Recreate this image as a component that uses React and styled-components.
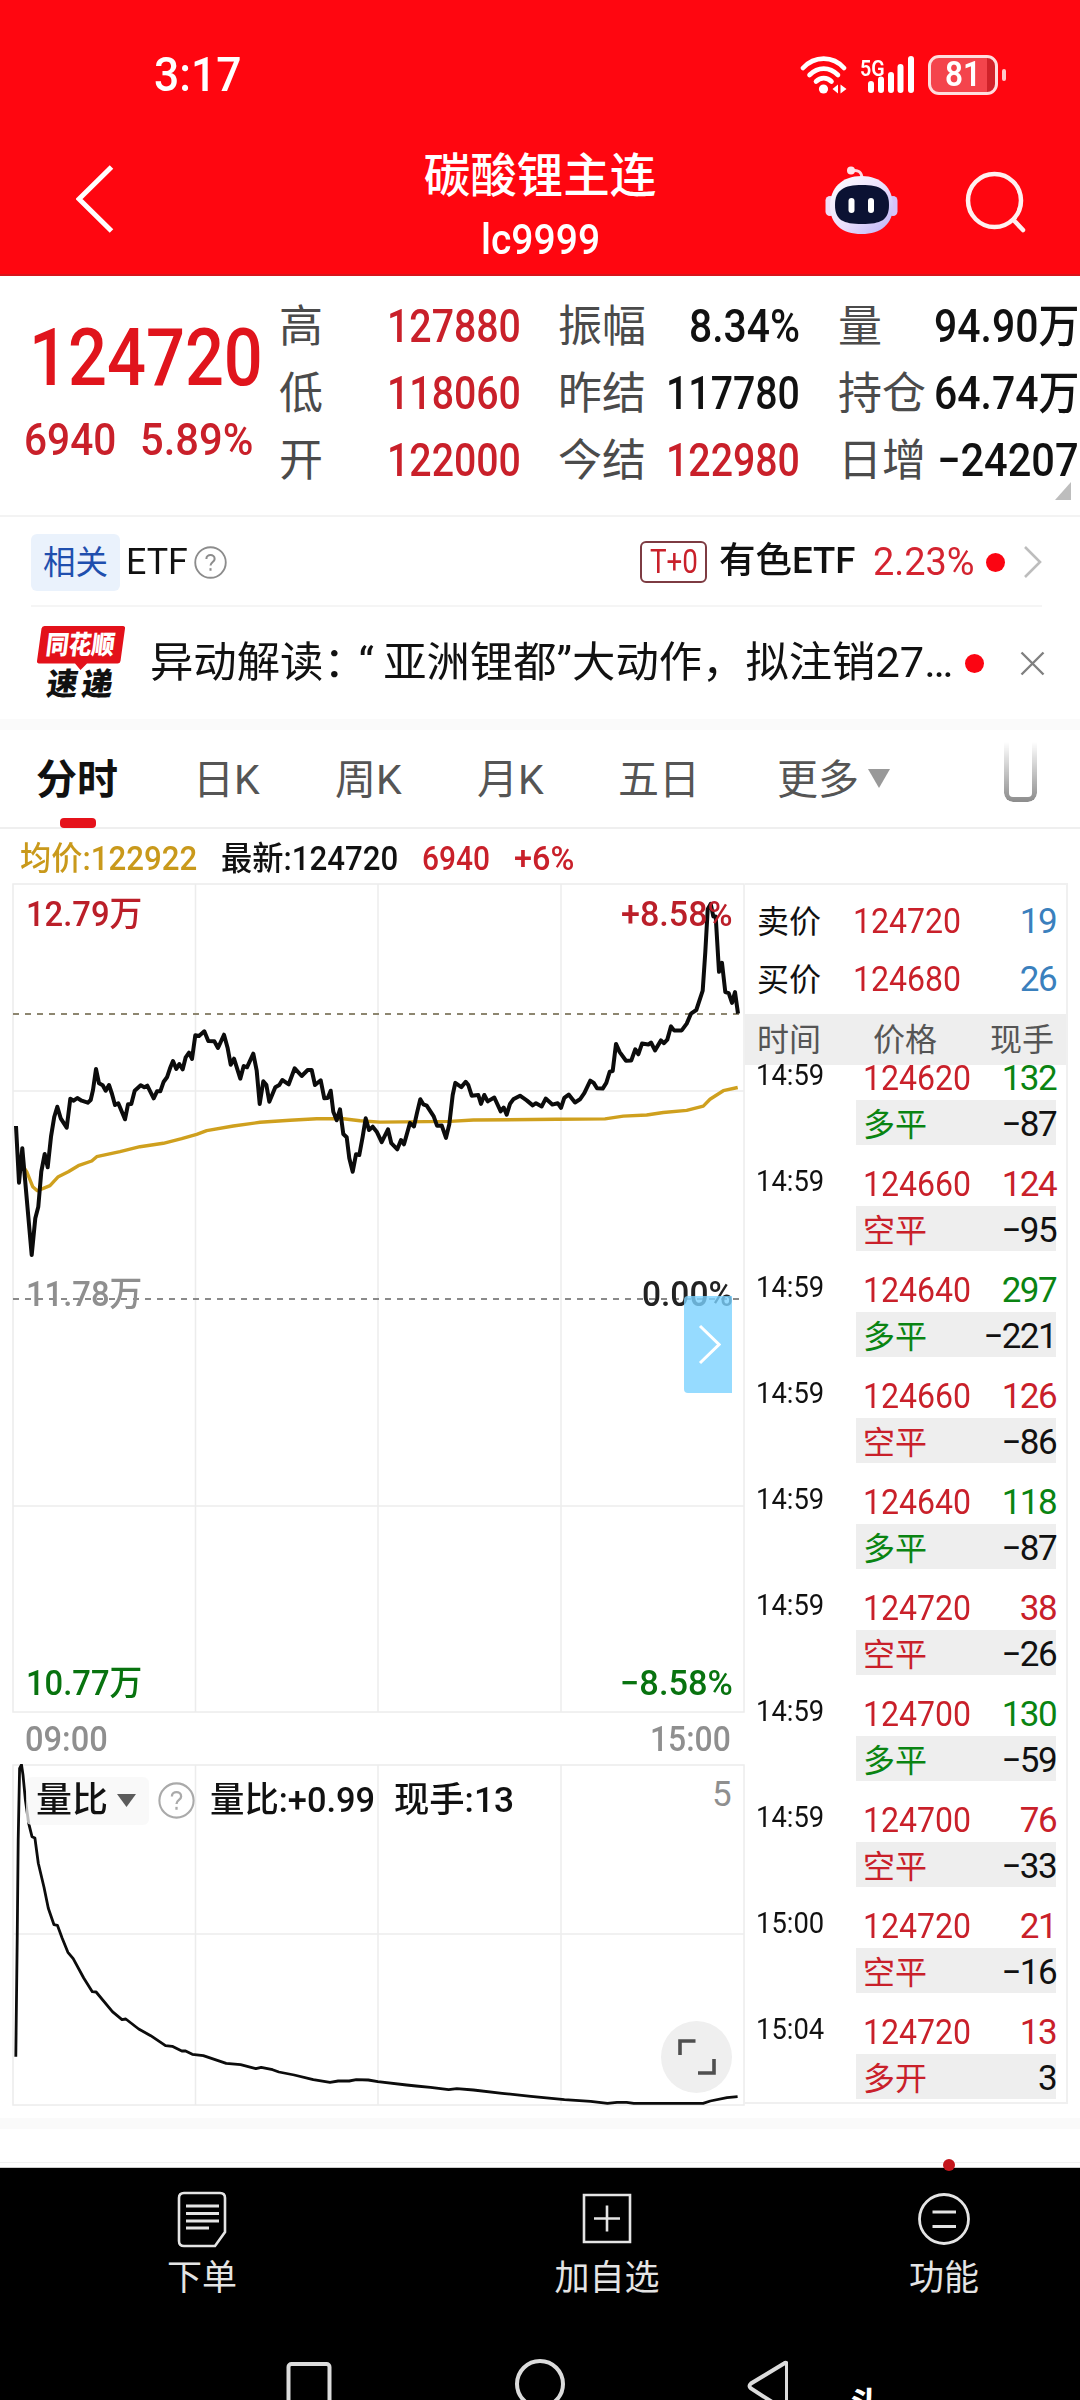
import React, { useLayoutEffect, useRef, useState } from 'react'
import styled, { createGlobalStyle } from 'styled-components'

const RED = '#c9202a'
const GREEN = '#0a8412'
const GRAY = '#8f8f8f'
const LINE = '#ececec'

const GlobalStyle = createGlobalStyle`
  * {
    box-sizing: border-box;
  }
  body {
    margin: 0;
    background: #fff;
    color: #111;
    font-family: Roboto, 'Noto Sans CJK SC', sans-serif;
  }
  svg {
    display: block;
    flex: none;
  }
`

/* ---------- text that is squeezed to the width of its cell ---------- */

const FitBox = styled.span`
  display: block;
  flex: none;
  width: ${({ $w }) => $w}px;
  margin-left: ${({ $ml }) => $ml || 0}px;
  font-size: ${({ $size }) => $size}px;
  font-weight: ${({ $weight }) => $weight || 400};
  color: ${({ $color }) => $color || 'inherit'};
  line-height: 1.2;
  white-space: nowrap;
`
const FitInner = styled.span`
  display: inline-block;
  vertical-align: top;
  transform-origin: 0 50%;
`

const Fit = ({ w, ml, size, weight, color, children }) => {
  const ref = useRef(null)
  const [scale, setScale] = useState(1)
  useLayoutEffect(() => {
    setScale(w / ref.current.offsetWidth)
  }, [w, children])
  return (
    <FitBox $w={w} $ml={ml} $size={size} $weight={weight} $color={color}>
      <FitInner ref={ref} style={{ transform: `scaleX(${scale})` }}>
        {children}
      </FitInner>
    </FitBox>
  )
}

/* ---------- header ---------- */

const Page = styled.div`
  width: 1080px;
  height: 2400px;
  overflow: hidden;
  display: flex;
  flex-direction: column;
`
const Header = styled.header`
  flex: none;
  height: 276px;
  background: #ff0610;
  color: #fff;
  border-bottom: 2px solid #d8141c;
`
const StatusBar = styled.div`
  height: 148px;
  padding: 1px 74px 0 154px;
  display: flex;
  align-items: center;
`
const Clock = styled.div`
  padding-top: 2px;
`
const StatusIcons = styled.div`
  margin-left: auto;
  display: flex;
  align-items: center;
`
const Network = styled.span`
  align-self: flex-start;
  width: 11px;
  margin-top: 1px;
  font-size: 22px;
  font-weight: 600;
  line-height: 22px;
`
const Battery = styled.div`
  width: 70px;
  height: 40px;
  margin-left: 12px;
  padding-left: 14px;
  border: 3px solid #ffdede;
  border-radius: 11px;
  display: flex;
  align-items: center;
  background: linear-gradient(90deg, #f4444c 56px, #d0222a 56px);
`
const BatteryTip = styled.div`
  width: 4px;
  height: 12px;
  margin-left: 4px;
  border-radius: 2px;
  background: #ffc9c9;
`
const TitleBar = styled.div`
  height: 126px;
  display: flex;
`
const TitleSide = styled.div`
  width: 423px;
  display: flex;
  padding: ${({ $pad }) => $pad};
`
const Titles = styled.div`
  width: 234px;
  display: flex;
  flex-direction: column;
  align-items: center;
`
const Title = styled.h1`
  margin: 0 0 10px;
  font-size: 46.5px;
  font-weight: 500;
  line-height: 56px;
  white-space: nowrap;
`

/* ---------- quote ---------- */

const Quote = styled.section`
  flex: none;
  height: 241px;
  border-bottom: 2px solid #f3f3f3;
  display: flex;
  position: relative;
`
const LastPrice = styled.div`
  width: 280px;
  padding-top: 34px;
`
const Change = styled.div`
  display: flex;
  margin-top: 7px;
`
const Stats = styled.div`
  display: grid;
  grid-template-columns: 109px 170px 109px 171px 95px 147px;
  grid-template-rows: repeat(3, 67px);
  align-items: center;
  padding-top: 17px;
`
const StatLabel = styled.span`
  font-size: 44px;
  line-height: 52px;
  color: #4b4b4b;
  white-space: nowrap;
`
const Corner = styled.i`
  position: absolute;
  left: 1055px;
  top: 206px;
  border: solid transparent;
  border-width: 0 0 18px 16px;
  border-bottom-color: #bdbdbd;
`

/* ---------- related ETF and news ---------- */

const EtfRow = styled.section`
  flex: none;
  height: 90px;
  margin: 0 38px 0 31px;
  padding-top: 2px;
  border-bottom: 2px solid #f5f5f5;
  display: flex;
  align-items: center;
`
const RelatedTag = styled.span`
  width: 89px;
  height: 57px;
  border-radius: 6px;
  background: #eaf2fc;
  color: #1f4fae;
  font-size: 32.5px;
  line-height: 59px;
  text-align: center;
`
const HelpSlot = styled.span`
  margin-left: 6px;
`
const TradeTag = styled.span`
  width: 67px;
  height: 42px;
  margin-left: auto;
  padding-left: 8px;
  border: 2px solid #7d3b42;
  border-radius: 6px;
  display: flex;
  align-items: center;
`
const Dot = styled.i`
  flex: none;
  width: 19px;
  height: 19px;
  border-radius: 50%;
  background: #fb0512;
  margin-left: ${({ $ml }) => $ml}px;
`
const More = styled.span`
  margin-left: 18px;
`
const Close = styled.span`
  margin-left: 36px;
`
const NewsRow = styled.section`
  flex: none;
  height: 112px;
  padding: 1px 0 0 37px;
  display: flex;
  align-items: center;
`
const NewsLogo = styled.div`
  position: relative;
  width: 88px;
  height: 76px;
  font-weight: 900;
`
const LogoTop = styled.span`
  position: absolute;
  left: 9px;
  top: 5px;
  font-size: 26px;
  line-height: 28px;
  color: #fff;
  white-space: nowrap;
  transform: scaleX(0.88) skewX(-8deg);
  transform-origin: 0 50%;
`
const LogoBottom = styled.span`
  position: absolute;
  left: 10px;
  top: 41px;
  font-size: 31px;
  line-height: 36px;
  letter-spacing: 4px;
  color: #111;
  white-space: nowrap;
  transform: skewX(-8deg);
`
const OpenQuote = styled.span`
  margin: 0 9px 0 -8px;
`
const Band = styled.div`
  flex: none;
  height: 11px;
  background: #fafafa;
`

/* ---------- tabs and legend ---------- */

const Tabs = styled.nav`
  flex: none;
  height: 99px;
  border-bottom: 2px solid #efefef;
  display: grid;
  grid-template-columns: 157px 142px 142px 141px 159px 228px 1fr;
  padding-left: 36px;
`
const Tab = styled.div`
  position: relative;
  height: 98px;
  padding-top: 24px;
  display: flex;
  font-size: 41px;
  line-height: 52px;
  white-space: nowrap;
  font-weight: ${({ $active }) => ($active ? 700 : 400)};
  color: ${({ $active }) => ($active ? '#111' : '#555')};
  &::after {
    content: '';
    display: ${({ $active }) => ($active ? 'block' : 'none')};
    position: absolute;
    left: 24px;
    bottom: 0;
    width: 36px;
    height: 10px;
    border-radius: 4px;
    background: #e5121b;
  }
`
const Caret = styled.i`
  width: ${({ $w }) => $w}px;
  height: ${({ $h }) => $h}px;
  margin-left: ${({ $ml }) => $ml}px;
  margin-top: ${({ $mt }) => $mt || 0}px;
  background: ${({ $color }) => $color};
  clip-path: polygon(0 0, 100% 0, 50% 100%);
`
const Clip = styled.div`
  width: 33px;
  height: 60px;
  margin: 12px 0 0 -1px;
  border: 5px solid #8c8c8c;
  border-top: 0;
  border-radius: 0 0 9px 9px;
  mask-image: linear-gradient(transparent, #000);
`
const Legend = styled.div`
  flex: none;
  height: 54px;
  padding: 5px 0 0 20px;
  display: flex;
  align-items: center;
`

/* ---------- charts ---------- */

const Main = styled.main`
  flex: none;
  height: 1235px;
  padding-left: 12px;
  display: flex;
`
const Charts = styled.div`
  width: 733px;
`
const PricePanel = styled.div`
  position: relative;
  height: 830px;
`
const RatioPanel = styled.div`
  position: relative;
  height: 342px;
`
const Axis = styled.div`
  height: 51px;
  padding: 2px 14px 0 13px;
  display: flex;
  align-items: center;
  justify-content: space-between;
`
const Mark = styled.div`
  position: absolute;
  top: ${({ $top }) => $top}px;
  ${({ $right }) => ($right ? 'right: 12px;' : 'left: 14px;')}
`
const Expand = styled.button`
  position: absolute;
  left: 672px;
  top: 413px;
  width: 48px;
  height: 97px;
  padding: 0 0 0 2px;
  border: 0;
  border-radius: 4px 0 0 4px;
  background: rgba(124, 210, 255, 0.8);
  display: grid;
  place-items: center;
`
const RatioBar = styled.div`
  position: absolute;
  left: 14px;
  top: 12px;
  width: 706px;
  height: 49px;
  display: flex;
  align-items: center;
`
const Picker = styled.div`
  width: 123px;
  height: 48px;
  margin-right: 9px;
  padding-left: 10px;
  border-radius: 6px;
  background: rgba(247, 247, 247, 0.75);
  display: flex;
  align-items: center;
`
const RatioMax = styled.span`
  margin: -11px 2px 0 auto;
  width: 18px;
  font-size: 35px;
  line-height: 40px;
  color: ${GRAY};
`
const FullScreen = styled.button`
  position: absolute;
  left: 649px;
  top: 257px;
  width: 71px;
  height: 72px;
  padding: 0;
  border: 0;
  border-radius: 50%;
  background: #efefef;
  display: grid;
  place-items: center;
`

/* ---------- order book ---------- */

const Book = styled.aside`
  width: 323px;
  height: 1221px;
  overflow: hidden;
  border: solid #f0f0f0;
  border-width: 2px 2px 2px 0;
`
const Offer = styled.div`
  height: 58px;
  padding: 0 11px 0 12px;
  display: flex;
  align-items: center;
`
const Offers = styled.div`
  height: 129px;
  padding-top: 8px;
`
const BookHead = styled.div`
  height: 51px;
  padding: 7px 12px 0;
  background: #eee;
  color: #555;
  font-size: 32px;
  line-height: 38px;
  display: grid;
  grid-template-columns: 116px 117px 1fr;
`
const Right = styled.span`
  margin-left: auto;
  font-size: 35px;
  line-height: 28px;
  color: ${({ $color }) => $color || '#111'};
  letter-spacing: -1.6px;
  margin-right: -1px;
`
const Trade = styled.div`
  height: 106px;
  padding: 0 11px 0 11px;
  display: grid;
  grid-template-columns: 100px 200px;
  grid-template-rows: 35px 45px;
`
const TradeTime = styled.div`
  margin-top: -7px;
`
const TradeTop = styled.div`
  height: 30px;
  margin-top: -1px;
  padding: 0 1px 0 7px;
  display: flex;
  align-items: center;
`
const TradeSub = styled.div`
  grid-column: 2;
  padding: 4px 1px 0 7px;
  background: #eee;
  display: flex;
  align-items: center;
`
const Kind = styled.span`
  font-size: 32px;
  line-height: 40px;
  color: ${({ $color }) => $color};
`

/* ---------- bottom ---------- */

const Gap = styled.div`
  flex: none;
  height: 39px;
  border-bottom: 1px solid #ccc;
  position: relative;
  background: linear-gradient(#fff 33px, #f0f0f0 33px, #f0f0f0 34px, #fff 34px);
`
const RedPoint = styled.i`
  position: absolute;
  left: 943px;
  top: 30px;
  width: 12px;
  height: 12px;
  border-radius: 50%;
  background: #c4161c;
`
const Footer = styled.footer`
  flex: 1;
  background: #000;
  color: #e4e4e4;
`
const Actions = styled.div`
  height: 190px;
  padding: 22px 34px 0 0;
  display: grid;
  grid-template-columns: 404px 406px 268px;
`
const Action = styled.div`
  display: flex;
  flex-direction: column;
  align-items: center;
  font-size: 35px;
  line-height: 44px;
  white-space: nowrap;
  svg {
    margin-bottom: 9px;
  }
`
const SystemNav = styled.div`
  height: 42px;
  padding-left: 286px;
  display: flex;
  overflow: hidden;
`
const Watermark = styled.span`
  margin: 31px 0 0 61px;
  font-size: 35px;
  font-weight: 700;
  line-height: 36px;
  color: #fff;
`

/* ---------- data ---------- */

const STATS = [
  ['高', '127880', 134, RED, '振幅', '8.34%', 111, '#111', '量', '94.90万', 145, '#111'],
  ['低', '118060', 134, RED, '昨结', '117780', 134, '#111', '持仓', '64.74万', 145, '#111'],
  ['开', '122000', 134, RED, '今结', '122980', 134, RED, '日增', '−24207', 142, '#111'],
]

const TRADES = [
  ['14:59', '124620', '132', GREEN, '多平', '−87'],
  ['14:59', '124660', '124', RED, '空平', '−95'],
  ['14:59', '124640', '297', GREEN, '多平', '−221'],
  ['14:59', '124660', '126', RED, '空平', '−86'],
  ['14:59', '124640', '118', GREEN, '多平', '−87'],
  ['14:59', '124720', '38', RED, '空平', '−26'],
  ['14:59', '124700', '130', GREEN, '多平', '−59'],
  ['14:59', '124700', '76', RED, '空平', '−33'],
  ['15:00', '124720', '21', RED, '空平', '−16'],
  ['15:04', '124720', '13', RED, '多开', '3'],
]

// first half of the session, [x, y] pairs
const PRICE_AM = [
  48, 768, 57, 938, 67, 835, 95, 1155, 106, 1045, 115, 1010, 124, 905, 134, 852, 143, 892, 153, 800,
  163, 740, 172, 710, 182, 745, 200, 773, 211, 686, 221, 692, 232, 684, 245, 692, 263, 698, 272, 690,
  279, 660, 288, 597, 297, 640, 308, 646, 317, 662, 327, 645, 336, 672, 345, 705, 355, 700, 375, 748,
  384, 703, 394, 702, 404, 662, 422, 646, 433, 652, 442, 647, 461, 685, 471, 664, 481, 664, 491, 635,
  501, 622, 510, 595, 519, 573, 529, 597, 538, 582, 548, 598, 557, 562, 567, 548, 576, 567, 586, 496,
  597, 498, 613, 484, 625, 513, 643, 514, 654, 534, 672, 494, 683, 535, 692, 584, 702, 566, 721, 626,
  731, 588, 741, 592, 760, 551, 770, 602, 779, 702, 790, 634, 799, 644, 808, 695, 826, 652, 838, 645,
  847, 630, 866, 643, 884, 595, 905, 618, 923, 600, 935, 600, 945, 645, 962, 631, 973, 685, 983, 684,
  992, 662, 1000, 725, 1010, 751, 1020, 718, 1030, 792, 1040, 802, 1048, 865, 1058, 905, 1068, 853,
  1078, 855, 1088, 800, 1097, 745, 1107, 780, 1118, 770, 1130, 785,
]
const PRICE_PM = [
  35, 762, 54, 726, 64, 765, 82, 782, 93, 756, 102, 768, 112, 735, 120, 708, 132, 718,
  141, 680, 151, 642, 160, 656, 170, 660, 191, 690, 201, 716, 215, 715, 228, 750, 238, 712, 248, 630,
  256, 596, 274, 608, 287, 593, 295, 602, 305, 632, 325, 630, 333, 655, 343, 630, 353, 648, 373, 637,
  392, 676, 401, 665, 410, 685, 420, 655, 430, 642, 450, 632, 470, 645, 488, 659, 498, 653, 515, 662,
  527, 640, 547, 657, 563, 653, 573, 666, 583, 638, 596, 629, 615, 651, 630, 642, 643, 625, 661, 590,
  671, 596, 681, 611, 698, 612, 709, 596, 719, 565, 728, 563, 738, 487, 749, 510, 768, 534, 784, 533,
  796, 502, 805, 516, 816, 486, 835, 489, 843, 483, 855, 505, 873, 477, 882, 485, 892, 475, 903, 438,
  912, 449, 935, 449, 950, 430, 963, 402, 979, 392, 998, 338, 1006, 230, 1013, 110, 1022, 95, 1030, 130,
  1037, 130, 1047, 285, 1056, 260, 1066, 342, 1076, 345, 1086, 372, 1095, 342, 1104, 402,
]
const AVG_AM = [
  70, 890, 80, 905, 98, 950, 112, 962, 130, 955, 150, 947, 175, 920, 205, 905, 235, 887, 275, 873,
  290, 860, 360, 845, 420, 830, 490, 820, 545, 806, 590, 793, 620, 782, 700, 768, 780, 757, 870, 751,
  950, 746, 1030, 746, 1080, 752,
]
const AVG_PM = [
  30, 706, 240, 704, 310, 700, 560, 698, 705, 697, 760, 689, 830, 686, 880, 679, 950, 673, 1000, 661,
  1020, 642, 1060, 618, 1103, 609,
]
const RATIO = [
  33, 1250, 36, 900, 38, 600, 41, 385, 45, 374, 48, 405, 53, 480, 60, 550, 67, 590, 73, 594, 80, 670,
  92, 742, 101, 805, 113, 854, 120, 856, 130, 895, 142, 937, 153, 956, 175, 1014, 193, 1055, 201, 1056,
  235, 1115, 255, 1139, 263, 1137, 290, 1167, 315, 1187, 346, 1217, 360, 1219, 380, 1233, 388, 1233,
  402, 1243, 425, 1247, 473, 1270, 503, 1274, 535, 1286, 546, 1282, 570, 1289, 583, 1296, 615, 1305,
  655, 1319, 690, 1327, 707, 1323, 730, 1323, 745, 1319, 770, 1320, 790, 1325, 850, 1335, 870, 1338,
  900, 1342, 938, 1349, 955, 1346, 990, 1350, 1050, 1360, 1110, 1369, 1180, 1379, 1235, 1384,
  1270, 1390, 1290, 1387, 1310, 1387, 1325, 1390, 1470, 1390, 1485, 1383, 1520, 1373, 1542, 1370,
]

const plot = (data, x0, y0, kx, ky) => {
  const out = []
  for (let i = 0; i < data.length; i += 2) {
    out.push(`${(x0 + data[i] * kx).toFixed(1)},${(y0 + data[i + 1] * ky).toFixed(1)}`)
  }
  return out.join(' ')
}

const PRICE_POINTS = `${plot(PRICE_AM, -12, -13, 1 / 3, 1 / 3)} ${plot(PRICE_PM, 358, -13, 1 / 3, 1 / 2.8)}`
const AVG_POINTS = `${plot(AVG_AM, -12, -13, 1 / 3, 1 / 3)} ${plot(AVG_PM, 358, -13, 1 / 3, 1 / 2.8)}`
const RATIO_POINTS = plot(RATIO, -12, -124, 1 / 2.0907, 1 / 3)

/* ---------- drawings ---------- */

const Grid = ({ height, rows }) => (
  <g fill="none" stroke={LINE} strokeWidth="1.5">
    <rect x="1" y="1" width="731" height={height} />
    {[183.5, 366, 549].map(x => <path key={x} d={`M${x} 1v${height}`} />)}
    {rows.map(y => <path key={y} d={`M1 ${y}h731`} />)}
  </g>
)

const PriceChart = () => (
  <svg width="733" height="830" viewBox="0 0 733 830">
    <Grid height={828} rows={[208, 623]} />
    <path d="M1 131h731" stroke="#8d8670" strokeWidth="1.8" strokeDasharray="6 6" />
    <path d="M1 416h731" stroke="#8a8a8a" strokeWidth="1.8" strokeDasharray="6 6" />
    <polyline points={AVG_POINTS} fill="none" stroke="#cfa01e" strokeWidth="3.4" strokeLinejoin="round" />
    <polyline points={PRICE_POINTS} fill="none" stroke="#0c0c0c" strokeWidth="4" strokeLinejoin="round" />
  </svg>
)

const RatioChart = () => (
  <svg width="733" height="342" viewBox="0 0 733 342">
    <Grid height={340} rows={[170]} />
    <polyline points={RATIO_POINTS} fill="none" stroke="#0c0c0c" strokeWidth="2.8" strokeLinejoin="round" />
  </svg>
)

const Wifi = () => (
  <svg width="60" height="40" viewBox="0 0 60 40" fill="none" stroke="#fff" strokeWidth="4.6" strokeLinecap="round">
    <path d="M3 13C14.5 .5 33 .5 44 13" />
    <path d="M9.5 20C18 11.5 29.5 11.5 38 20" />
    <path d="M16 26.5C20.5 22 27 22 31.5 26.5" />
    <circle cx="23.500" cy="34" r="4.6" fill="#fff" stroke="none" />
    <path d="M38 29.5v9l-5.500-4.5zM40.500 29.5l6 4.5-6 4.5z" fill="#fff" stroke="none" />
  </svg>
)

const Signal = () => (
  <svg width="45" height="40" viewBox="11 0 45 40" overflow="visible">
    <path
      d="M11 29v6M21 24.5V35M31 20v15M40.5 12v23M51 4v31"
      stroke="#fff"
      strokeWidth="6"
      strokeLinecap="round"
    />
  </svg>
)

const Back = () => (
  <svg width="38" height="68" viewBox="0 0 38 68" fill="none" stroke="#fff" strokeWidth="5">
    <path d="M35.5 2 3 34l32.500 32" />
  </svg>
)

const Robot = () => (
  <svg width="73" height="69" viewBox="0 0 73 69">
    <defs>
      <linearGradient id="shell" x1="0" y1="0" x2="1" y2="1">
        <stop offset="0" stopColor="#fff" />
        <stop offset=".55" stopColor="#e9defc" />
        <stop offset="1" stopColor="#b9b0f6" />
      </linearGradient>
    </defs>
    <path d="M26 5c7-2 11 1 11 8" fill="none" stroke="#ffd9e2" strokeWidth="3" />
    <circle cx="26" cy="4.500" r="4" fill="#ffe3ea" />
    <rect x=".5" y="30" width="9" height="20" rx="4.500" fill="#f1dcf8" />
    <rect x="63.500" y="30" width="9" height="20" rx="4.500" fill="#d6c2fa" />
    <path d="M36.500 10C56 10 68 22 68 40 68 58 56 68 36.500 68S5 58 5 40C5 22 17 10 36.500 10z" fill="url(#shell)" />
    <path d="M37 19c18 0 27 5 27 20s-8 19-27 19-27-4-27-19 9-20 27-20z" fill="#0b1233" />
    <rect x="23.500" y="32" width="6" height="15" rx="3" fill="#fff" />
    <rect x="43" y="32" width="6" height="15" rx="3" fill="#fff" />
  </svg>
)

const Search = () => (
  <svg width="62" height="64" viewBox="0 0 62 64" fill="none" stroke="#fff0f0" strokeWidth="4.500" strokeLinecap="round">
    <circle cx="29.500" cy="30.500" r="26.500" />
    <path d="m48.500 50 9.500 10" />
  </svg>
)

const Help = ({ r, color }) => (
  <svg width={r * 2 + 2} height={r * 2 + 2} viewBox="0 0 32 32" fill="none" stroke={color} strokeWidth="1.800">
    <circle cx="16" cy="16" r="14.800" />
    <path d="M12 12.500c0-5 8-5 8 0 0 3-4 3-4 6.500" strokeWidth="2" />
    <path d="M16 21.500v2.500" strokeWidth="2" />
  </svg>
)

const Chevron = ({ color, width = 19, height = 34, stroke = 2.6 }) => (
  <svg width={width} height={height} viewBox={`0 0 ${width} ${height}`} fill="none" stroke={color} strokeWidth={stroke}>
    <path d={`M2 2 ${width - 2} ${height / 2} 2 ${height - 2}`} />
  </svg>
)

const Cross = () => (
  <svg width="25" height="25" viewBox="0 0 25 25" stroke="#808080" strokeWidth="2.400">
    <path d="M1.500 1.500l22 22M23.500 1.500l-22 22" />
  </svg>
)

const LogoPlate = () => (
  <svg width="88" height="44" viewBox="0 0 88 44">
    <path d="M7.500 0H86a2 2 0 0 1 2 2.500L83.500 35q-.4 2.500-3 2.500H50L43.500 44 38 37.500H2a2 2 0 0 1-2-2.500L4.500 2.500Q5 0 7.500 0z" fill="#e3111a" />
  </svg>
)

const App = () => (
  <>
    <GlobalStyle />
    <Page>
      <Header>
        <StatusBar>
          <Clock>
            <Fit w={87} size={49} weight={500}>3:17</Fit>
          </Clock>
          <StatusIcons>
            <Wifi />
            <Network>
              <Fit w={25} size={22} weight={600}>5G</Fit>
            </Network>
            <Signal />
            <Battery>
              <Fit w={36} size={35} weight={600}>81</Fit>
            </Battery>
            <BatteryTip />
          </StatusIcons>
        </StatusBar>
        <TitleBar>
          <TitleSide $pad="17px 0 0 76px">
            <Back />
          </TitleSide>
          <Titles>
            <Title>碳酸锂主连</Title>
            <Fit w={119} size={43} weight={500}>lc9999</Fit>
          </Titles>
          <TitleSide $pad="18px 0 0 168px">
            <Robot />
            <TitleSide $pad="4px 0 0 67px">
              <Search />
            </TitleSide>
          </TitleSide>
        </TitleBar>
      </Header>

      <Quote>
        <LastPrice>
          <Fit w={234} ml={29} size={80} weight={500} color="#e0141c">124720</Fit>
          <Change>
            <Fit w={92} ml={24} size={45} weight={500} color={RED}>6940</Fit>
            <Fit w={113} ml={24} size={45} weight={500} color={RED}>5.89%</Fit>
          </Change>
        </LastPrice>
        <Stats>
          {STATS.map(row => [0, 4, 8].map(i => (
            <React.Fragment key={row[i]}>
              <StatLabel>{row[i]}</StatLabel>
              <Fit w={row[i + 2]} ml={(i === 8 ? 146 : 133) - row[i + 2]} size={46} weight={500} color={row[i + 3]}>
                {row[i + 1]}
              </Fit>
            </React.Fragment>
          )))}
        </Stats>
        <Corner />
      </Quote>

      <EtfRow>
        <RelatedTag>相关</RelatedTag>
        <Fit w={62} ml={6} size={37}>ETF</Fit>
        <HelpSlot>
          <Help r={15.5} color="#8c8c8c" />
        </HelpSlot>
        <TradeTag>
          <Fit w={48} size={33} color={RED}>T+0</Fit>
        </TradeTag>
        <Fit w={136} ml={12} size={36} weight={500}>有色ETF</Fit>
        <Fit w={102} ml={18} size={39} color="#d42430">2.23%</Fit>
        <Dot $ml={11} />
        <More>
          <Chevron color="#bdbdbd" />
        </More>
      </EtfRow>

      <NewsRow>
        <NewsLogo>
          <LogoPlate />
          <LogoTop>同花顺</LogoTop>
          <LogoBottom>速递</LogoBottom>
        </NewsLogo>
        <Fit w={803} ml={25} size={42}>
          异动解读：<OpenQuote>“</OpenQuote>亚洲锂都”大动作，拟注销27…
        </Fit>
        <Dot $ml={12} />
        <Close>
          <Cross />
        </Close>
      </NewsRow>
      <Band />

      <Tabs>
        <Tab $active>分时</Tab>
        <Tab>日K</Tab>
        <Tab>周K</Tab>
        <Tab>月K</Tab>
        <Tab>五日</Tab>
        <Tab>
          更多
          <Caret $w={22} $h={19} $ml={9} $mt={15} $color="#999" />
        </Tab>
        <Clip />
      </Tabs>
      <Legend>
        <Fit w={177} size={33} weight={500} color="#c9991b">均价:122922</Fit>
        <Fit w={177} ml={24} size={33} weight={500}>最新:124720</Fit>
        <Fit w={68} ml={24} size={33} weight={500} color={RED}>6940</Fit>
        <Fit w={60} ml={24} size={33} weight={500} color={RED}>+6%</Fit>
      </Legend>

      <Main>
        <Charts>
          <PricePanel>
            <Mark $top={11}><Fit w={116} size={35} weight={500} color="#bb1f29">12.79万</Fit></Mark>
            <Mark $top={11} $right><Fit w={112} size={35} weight={500} color="#bb1f29">+8.58%</Fit></Mark>
            <Mark $top={391}><Fit w={116} size={35} weight={500} color={GRAY}>11.78万</Fit></Mark>
            <Mark $top={391} $right><Fit w={91} size={35} weight={500} color="#222">0.00%</Fit></Mark>
            <Mark $top={780}><Fit w={116} size={35} weight={500} color="#08730f">10.77万</Fit></Mark>
            <Mark $top={780} $right><Fit w={113} size={35} weight={500} color="#08730f">−8.58%</Fit></Mark>
            <PriceChart />
            <Expand>
              <Chevron color="#fff" width={23} height={41} stroke={3} />
            </Expand>
          </PricePanel>
          <Axis>
            <Fit w={83} size={35} weight={500} color={GRAY}>09:00</Fit>
            <Fit w={81} size={35} weight={500} color={GRAY}>15:00</Fit>
          </Axis>
          <RatioPanel>
            <RatioChart />
            <RatioBar>
              <Picker>
                <Fit w={72} size={35} weight={500}>量比</Fit>
                <Caret $w={19} $h={13} $ml={9} $color="#5c5c5c" />
              </Picker>
              <Help r={17.5} color="#aaa" />
              <Fit w={165} ml={15} size={35} weight={500}>量比:+0.99</Fit>
              <Fit w={120} ml={19} size={35} weight={500}>现手:13</Fit>
              <RatioMax>5</RatioMax>
            </RatioBar>
            <FullScreen>
              <svg width="40" height="40" viewBox="0 0 40 40" fill="none" stroke="#4f4f4f" strokeWidth="3.600">
                <path d="M3 18V4h15.500M37 22v14H21" />
              </svg>
            </FullScreen>
          </RatioPanel>
        </Charts>

        <Book>
          <Offers>
            <Offer>
              <Fit w={64} size={32}>卖价</Fit>
              <Fit w={108} ml={32} size={35} color={RED}>124720</Fit>
              <Right $color="#3a80bd">19</Right>
            </Offer>
            <Offer>
              <Fit w={64} size={32}>买价</Fit>
              <Fit w={108} ml={32} size={35} color={RED}>124680</Fit>
              <Right $color="#3a80bd">26</Right>
            </Offer>
          </Offers>
          <BookHead>
            <span>时间</span>
            <span>价格</span>
            <span>现手</span>
          </BookHead>
          {TRADES.map(([time, price, volume, color, kind, delta], index) => (
            <Trade key={index}>
              <TradeTime>
                <Fit w={68} size={29}>{time}</Fit>
              </TradeTime>
              <TradeTop>
                <Fit w={108} size={35} color={RED}>{price}</Fit>
                <Right $color={color}>{volume}</Right>
              </TradeTop>
              <TradeSub>
                <Kind $color={color}>{kind}</Kind>
                <Right>{delta}</Right>
              </TradeSub>
            </Trade>
          ))}
        </Book>
      </Main>
      <Band />
      <Gap>
        <RedPoint />
      </Gap>

      <Footer>
        <Actions>
          <Action>
            <svg width="50" height="58" viewBox="0 0 50 58" fill="none" stroke="currentColor" strokeWidth="2.600">
              <path d="M7 3h36q5 0 5 5v34L38 56H7q-5 0-5-5V8q0-5 5-5z" />
              <path d="M9 16h33M9 23.500h33M9 31h33M9 38h23" strokeWidth="3" />
            </svg>
            下单
          </Action>
          <Action>
            <svg width="50" height="58" viewBox="0 0 50 58" fill="none" stroke="currentColor" strokeWidth="2.600">
              <path d="M2 5h46v47H2zM25 15.500v26M12 28.500h26" />
            </svg>
            加自选
          </Action>
          <Action>
            <svg width="54" height="58" viewBox="0 0 54 58" fill="none" stroke="currentColor" strokeWidth="2.800">
              <circle cx="27" cy="29" r="24.500" />
              <path d="M15.500 22h23.500M15.500 36.500h23.500" />
            </svg>
            功能
          </Action>
        </Actions>
        <SystemNav>
          <svg width="502" height="42" viewBox="0 0 502 42" fill="none" stroke="#dcdcdc" strokeWidth="4">
            <rect x="2.500" y="6" width="41" height="46" rx="3" />
            <circle cx="254" cy="26" r="23" />
            <path d="M498 5.500q3-2 3 2v42q0 4-3 2l-33-21q-3-2.500 0-5z" />
          </svg>
          <Watermark>头</Watermark>
        </SystemNav>
      </Footer>
    </Page>
  </>
)

export default App
